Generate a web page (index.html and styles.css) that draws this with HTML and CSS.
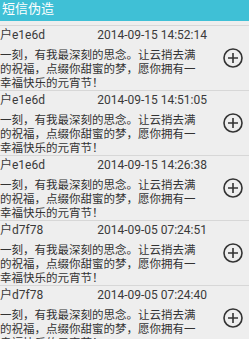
FILE: index.html
```html
<!DOCTYPE html>
<html>
<head>
<meta charset="utf-8">
<link rel="stylesheet" href="styles.css">
</head>
<body>
<div class="appbar"><span class="title">短信伪造</span></div>
<div class="list">
  <div class="item">
    <div class="content">
      <div class="meta"><span class="user">户e1e6d</span><span class="date">2014-09-15 14:52:14</span></div>
      <div class="msg"><div>一刻，有我最深刻的思念。让云捎去满</div><div>的祝福，点缀你甜蜜的梦，愿你拥有一</div><div>幸福快乐的元宵节！</div></div>
    </div>
    <svg class="add" viewBox="0 0 20 20"><circle cx="10" cy="10" r="9" /><path d="M10 5v10M5 10h10"/></svg>
  </div>
  <div class="item">
    <div class="content">
      <div class="meta"><span class="user">户e1e6d</span><span class="date">2014-09-15 14:51:05</span></div>
      <div class="msg"><div>一刻，有我最深刻的思念。让云捎去满</div><div>的祝福，点缀你甜蜜的梦，愿你拥有一</div><div>幸福快乐的元宵节！</div></div>
    </div>
    <svg class="add" viewBox="0 0 20 20"><circle cx="10" cy="10" r="9" /><path d="M10 5v10M5 10h10"/></svg>
  </div>
  <div class="item">
    <div class="content">
      <div class="meta"><span class="user">户e1e6d</span><span class="date">2014-09-15 14:26:38</span></div>
      <div class="msg"><div>一刻，有我最深刻的思念。让云捎去满</div><div>的祝福，点缀你甜蜜的梦，愿你拥有一</div><div>幸福快乐的元宵节！</div></div>
    </div>
    <svg class="add" viewBox="0 0 20 20"><circle cx="10" cy="10" r="9" /><path d="M10 5v10M5 10h10"/></svg>
  </div>
  <div class="item">
    <div class="content">
      <div class="meta"><span class="user">户d7f78</span><span class="date">2014-09-05 07:24:51</span></div>
      <div class="msg"><div>一刻，有我最深刻的思念。让云捎去满</div><div>的祝福，点缀你甜蜜的梦，愿你拥有一</div><div>幸福快乐的元宵节！</div></div>
    </div>
    <svg class="add" viewBox="0 0 20 20"><circle cx="10" cy="10" r="9" /><path d="M10 5v10M5 10h10"/></svg>
  </div>
  <div class="item">
    <div class="content">
      <div class="meta"><span class="user">户d7f78</span><span class="date">2014-09-05 07:24:40</span></div>
      <div class="msg"><div>一刻，有我最深刻的思念。让云捎去满</div><div>的祝福，点缀你甜蜜的梦，愿你拥有一</div><div>幸福快乐的元宵节！</div></div>
    </div>
    <svg class="add" viewBox="0 0 20 20"><circle cx="10" cy="10" r="9" /><path d="M10 5v10M5 10h10"/></svg>
  </div>
</div>
</body>
</html>
```
FILE: styles.css
```css
html, body {
  margin: 0;
  padding: 0;
  background: #eeeeee;
  overflow: hidden;
}
body {
  width: 249px;
  font-family: Roboto, "Noto Sans CJK SC", sans-serif;
}
.appbar {
  height: 21px;
  background: #3fc0d6;
  padding-left: 2px;
}
.title {
  display: block;
  color: #ffffff;
  font-size: 13px;
  line-height: 18px;
}
.list {
  padding-top: 4px;
}
.item {
  display: flex;
  align-items: center;
  border-top: 1px solid #d7d7d7;
  height: 64px;
}
.content {
  width: 207px;
  flex: none;
}
.meta {
  display: flex;
  justify-content: space-between;
  font-size: 12px;
  line-height: 16px;
  color: #3a3a3a;
}
.msg {
  margin-top: 5px;
  font-size: 11.5px;
  line-height: 14px;
  color: #333333;
  white-space: nowrap;
}
.add {
  width: 20px;
  height: 20px;
  margin-left: 16px;
  flex: none;
  fill: none;
  stroke: #333333;
  stroke-width: 1.6;
}
```
